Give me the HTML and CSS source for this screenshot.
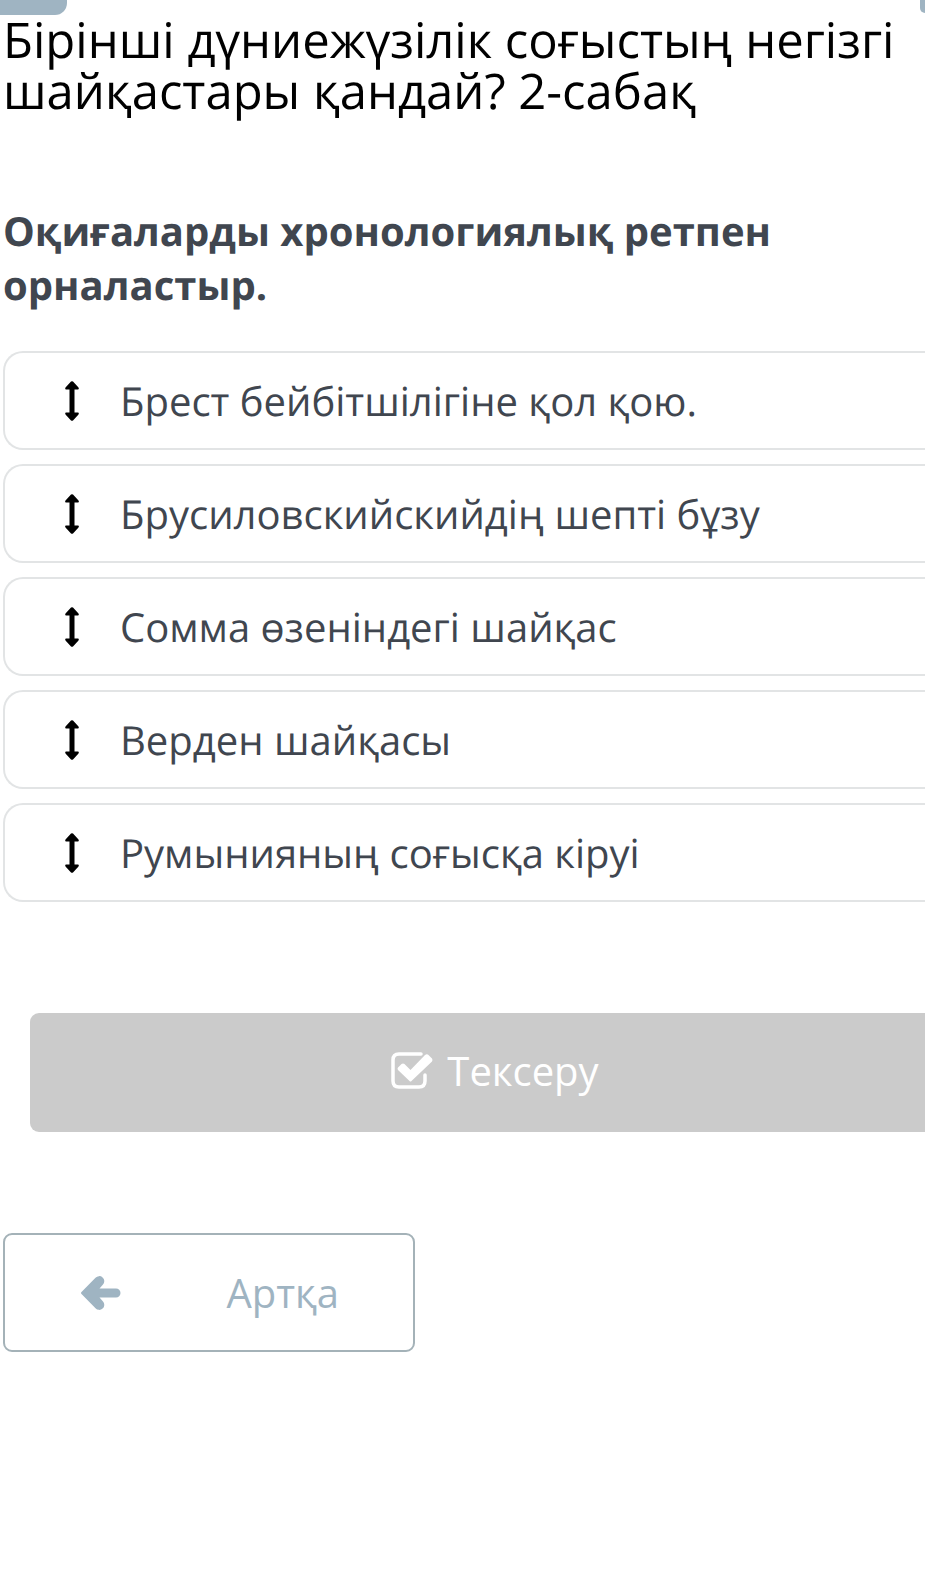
FILE: index.html
```html
<!DOCTYPE html>
<html lang="kk">
<head>
<meta charset="utf-8">
<meta name="viewport" content="width=device-width, initial-scale=1">
<title>Бірінші дүниежүзілік соғыстың негізгі шайқастары қандай? 2-сабақ</title>
<link rel="stylesheet" href="styles.css">
</head>
<body>
<svg class="defs" aria-hidden="true">
  <symbol id="updown" viewBox="0 0 16 40"><path d="M7 .500Q8 0 9 .500L14.500 6.500Q15.500 8.500 14 8.500H10.500V31.500H14Q15.500 31.500 14.500 33.500L9 39.500Q8 40 7 39.500L1.500 33.500Q.500 31.500 2 31.500H5.500V8.500H2Q.500 8.500 1.500 6.500Z"/></symbol>
</svg>
<div class="tabs"><span class="tab tab-left"></span><span class="tab tab-right"></span></div>
<main class="lesson">
  <h1 class="title">Бірінші дүниежүзілік соғыстың негізгі шайқастары қандай? 2-сабақ</h1>
  <h2 class="question">Оқиғаларды хронологиялық ретпен орналастыр.</h2>
  <ul class="events">
    <li class="event"><svg class="handle" aria-hidden="true"><use href="#updown"/></svg>Брест бейбітшілігіне қол қою.</li>
    <li class="event"><svg class="handle" aria-hidden="true"><use href="#updown"/></svg>Брусиловскийскийдің шепті бұзу</li>
    <li class="event"><svg class="handle" aria-hidden="true"><use href="#updown"/></svg>Сомма өзеніндегі шайқас</li>
    <li class="event"><svg class="handle" aria-hidden="true"><use href="#updown"/></svg>Верден шайқасы</li>
    <li class="event"><svg class="handle" aria-hidden="true"><use href="#updown"/></svg>Румынияның соғысқа кіруі</li>
  </ul>
  <button class="check" type="button">
    <svg class="check-icon" viewBox="0 0 42 38" aria-hidden="true"><path d="M30 2H8Q2 2 2 8V29Q2 35 8 35H28Q34 35 34 29V23" fill="none" stroke="currentColor" stroke-width="3.500" stroke-linecap="round"/><path d="M7 15.500 10.500 12Q12 11 13.500 12L19.500 18 34 3Q36 1.500 37.500 3L41 6.500Q42 8 41 9.500L20.500 29Q19.500 30 18.500 29L7 18Q6 16.500 7 15.500Z" fill="currentColor"/></svg>
    <span>Тексеру</span>
  </button>
  <button class="back" type="button">
    <svg class="back-icon" viewBox="0 0 40 34" aria-hidden="true"><path d="M.500 16 14.500 1.800A4.800 4.800 0 0 1 22 8.500L18.500 12.500H35A4.500 4.500 0 0 1 35 21.500H18.500L22 25.500A4.800 4.800 0 0 1 14.500 32.200L.500 18Q-.500 17 .500 16Z" fill="currentColor"/></svg>
    <span>Артқа</span>
  </button>
</main>
</body>
</html>
```
FILE: styles.css
```css
* { box-sizing: border-box; }
body { margin: 0; background: #fff; color: #40464f; font-family: "Open Sans", "Noto Sans", sans-serif; font-size: 40px; text-rendering: geometricPrecision; overflow-x: hidden; }
.defs { display: none; }
.tabs { display: flex; justify-content: space-between; height: 15px; }
.tab { background: #9fb4c2; }
.tab-left { width: 67px; border-radius: 0 0 12px 0; }
.tab-right { width: 5px; height: 13px; border-radius: 0 0 0 12px; }
.lesson { padding-left: 3px; }
.title { margin: 0; color: #000; font-size: 49px; line-height: 51px; font-weight: 400; }
.question { margin: 87px 0 0; padding-right: 100px; font-size: 40px; line-height: 54px; font-weight: 700; }
.events { list-style: none; margin: 39px 0 0; padding: 0; display: grid; gap: 14px; }
.event { display: flex; align-items: center; height: 99px; padding-left: 59px; border: 2px solid #e2e4e5; border-right: 0; border-radius: 20px 0 0 20px; }
.handle { width: 16px; height: 40px; margin-right: 40px; fill: #000; }
.check, .back { display: flex; align-items: center; font: inherit; }
.check { justify-content: center; gap: 14px; width: calc(100% - 27px); height: 119px; margin: 111px 0 0 27px; padding: 0 0 4px 35px; border: 0; border-radius: 9px 0 0 9px; background: #cbcbcb; color: #fff; }
.check-icon { width: 42px; height: 38px; }
.back { justify-content: space-between; width: 412px; height: 119px; margin-top: 101px; padding: 0 74px 0 76px; border: 2px solid #a4b2b8; border-radius: 9px; background: #fff; color: #9fb4c2; }
.back-icon { width: 40px; height: 34px; }
```
